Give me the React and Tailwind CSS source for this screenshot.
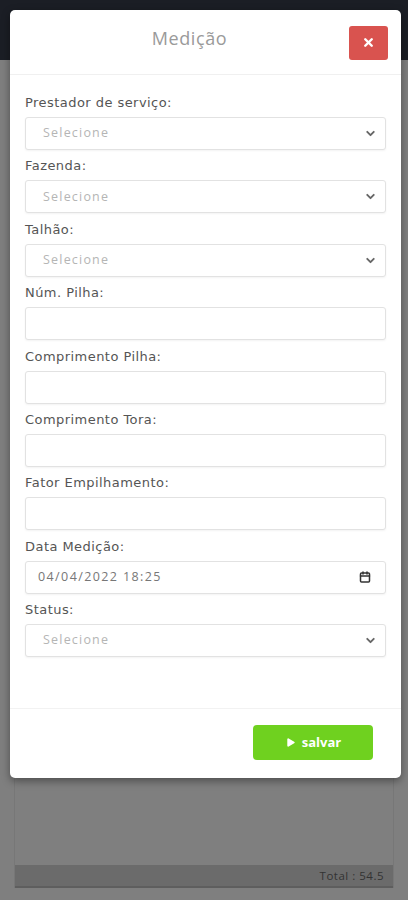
import { X, Play, ChevronDown, Calendar } from 'lucide-react'

const FIELDS = [
  { label: 'Prestador de serviço:', type: 'select' },
  { label: 'Fazenda:', type: 'select' },
  { label: 'Talhão:', type: 'select' },
  { label: 'Núm. Pilha:', type: 'text' },
  { label: 'Comprimento Pilha:', type: 'text' },
  { label: 'Comprimento Tora:', type: 'text' },
  { label: 'Fator Empilhamento:', type: 'text' },
  { label: 'Data Medição:', type: 'date', value: '04/04/2022 18:25' },
  { label: 'Status:', type: 'select' },
]

const boxCls = "w-full h-[33px] rounded-[3px] border border-[#e2e2e2] bg-white shadow-[0_1px_2px_rgba(0,0,0,0.05)] text-[12.5px] outline-none"

function Field({ field }) {
  return (
    <div className="flex flex-col">
      <label className="text-[13px] text-[#555] leading-[15px] mb-[7px] tracking-[0.45px]" style={{ fontFamily: '"DejaVu Sans", sans-serif' }}>
        {field.label}
      </label>
      {field.type === 'select' && (
        <div className={`${boxCls} flex items-center justify-between pl-[17px] pr-[8px]`}>
          <span className="text-[#b5b5b5] tracking-[1.2px]">Selecione</span>
          <ChevronDown size={13} strokeWidth={3.5} className="text-[#666]" />
        </div>
      )}
      {field.type === 'text' && <input type="text" className={`${boxCls} px-3`} />}
      {field.type === 'date' && (
        <div className={`${boxCls} flex items-center justify-between pl-[12px] pr-[14px]`}>
          <span className="text-[#777] tracking-[1.4px]">{field.value}</span>
          <Calendar size={12} strokeWidth={3} className="text-[#333]" />
        </div>
      )}
    </div>
  )
}

export default function App() {
  return (
    <div className="relative w-[408px] h-[900px] overflow-hidden bg-[#7f7f7f]" style={{ fontFamily: '"Open Sans", "Liberation Sans", sans-serif' }}>
      {/* page under the overlay */}
      <div className="h-[60px] bg-[#1b1e25]" />
      <div className="px-[14px] pt-[18px]">
        <div className="h-[810px] border-l border-r border-[#777] flex flex-col justify-end">
          <div className="h-[23px] bg-[#6b6b6b] border-b-2 border-[#5e5e5e] flex items-center justify-end px-[9px] text-[11.5px] text-[#333] tracking-[0.5px]">
            Total : 54.5
          </div>
        </div>
      </div>

      {/* modal */}
      <div className="absolute left-[10px] top-[10px] w-[391px] h-[768px] bg-white rounded-[5px] shadow-[0_3px_8px_rgba(0,0,0,0.4)] flex flex-col">
        <div className="h-[65px] flex items-center pl-[20px] pr-[13px] border-b border-[#f0f0f0] shrink-0">
          <h3 className="flex-1 text-center text-[18px] text-[#9a9a9a] tracking-[0.6px] -mt-[8px]">Medição</h3>
          <button className="w-[39px] h-[34px] rounded-[3px] bg-[#d9534f] flex items-center justify-center mt-[1px]">
            <X size={13} strokeWidth={4.5} className="text-white" />
          </button>
        </div>

        <div className="px-[15px] pt-[20px] flex flex-col gap-[8.4px] border-b border-[#f2f2f2] pb-[51px]">
          {FIELDS.map(f => <Field key={f.label} field={f} />)}
        </div>

        <div className="flex justify-end px-[28px] pt-[16px]">
          <button className="w-[120px] h-[35px] rounded-[4px] bg-[#6fd11f] text-white font-bold text-[13px] flex items-center justify-center gap-[6px]">
            <Play size={11} fill="white" strokeWidth={0} />
            salvar
          </button>
        </div>
      </div>
    </div>
  )
}
